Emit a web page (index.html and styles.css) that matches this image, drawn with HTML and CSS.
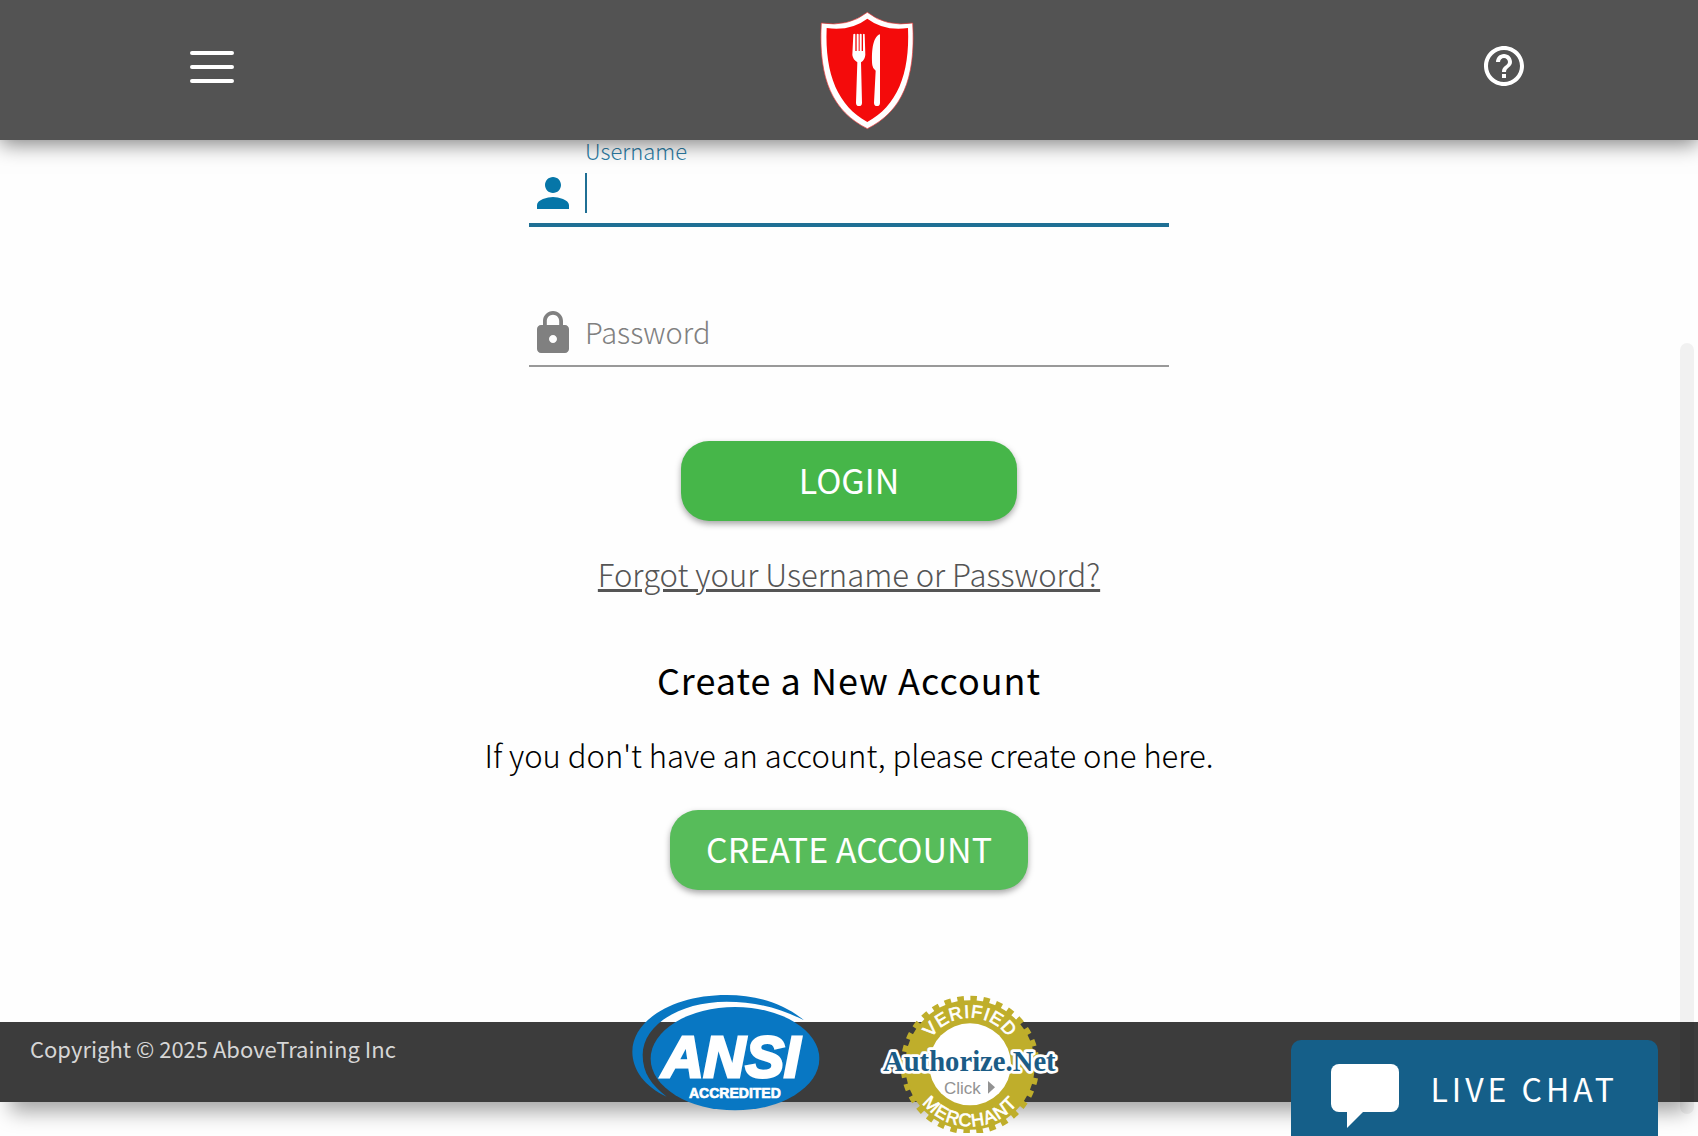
FILE: index.html
```html
<!DOCTYPE html>
<html lang="en">
<head>
<meta charset="utf-8">
<meta name="viewport" content="width=device-width, initial-scale=1">
<title>Login - AboveTraining</title>
<link rel="stylesheet" href="styles.css">
</head>
<body>
<header class="topbar">
  <button class="icon-button menu-button" type="button" aria-label="Menu">
    <svg width="44" height="32" viewBox="0 0 44 32" stroke="#fff" stroke-width="4" stroke-linecap="round"><path d="M2 2H42M2 16H42M2 30H42"/></svg>
  </button>
  <a class="logo" href="#" aria-label="Home">
    <svg width="96" height="120" viewBox="117 30 288 360">
      <path fill="#fff" stroke="#e33" stroke-width="2" d="M262 37Q205 82 124 69C114 240 160 335 262 386C364 335 408 240 398 69Q318 82 262 37Z"/>
      <path fill="#f40b0b" d="M262 56Q212 94 140 84C134 225 175 318 262 366C350 318 390 225 384 84Q312 94 262 56Z"/>
      <path fill="#fff" d="M220 103Q223 99 226 103V153H230V103Q233 99 236 103V153H239V103Q242 99 245 103V153H249V103Q252 99 254 103L256 164Q255 179 243 187L246 308Q246 318 237 318Q228 318 228 308L232 187Q219 179 217 165Z"/>
      <path fill="#fff" d="M300 103V308Q300 318 291 318Q282 318 282 308L287 212Q278 206 277 196C274 160 277 110 300 103Z"/>
    </svg>
  </a>
  <button class="icon-button help-button" type="button" aria-label="Help">
    <svg width="48" height="48" viewBox="0 0 24 24" fill="#fff"><path d="M11 18h2v-2h-2v2zm1-16C6.480 2 2 6.480 2 12s4.480 10 10 10 10-4.480 10-10S17.520 2 12 2zm0 18c-4.410 0-8-3.590-8-8s3.590-8 8-8 8 3.590 8 8-3.590 8-8 8zm0-14c-2.210 0-4 1.790-4 4h2c0-1.100.9-2 2-2s2 .9 2 2c0 2-3 1.750-3 5h2c0-2.250 3-2.500 3-5 0-2.210-1.790-4-4-4z"/></svg>
  </button>
</header>

<main class="content">
  <form class="login-form">
    <div class="field field-active">
      <label class="field-label" for="username">Username</label>
      <div class="field-row">
        <svg class="field-icon" width="48" height="48" viewBox="0 0 24 24"><path d="M12 12c2.210 0 4-1.790 4-4s-1.790-4-4-4-4 1.790-4 4 1.790 4 4 4zm0 2c-2.670 0-8 1.340-8 4v2h16v-2c0-2.660-5.330-4-8-4z"/></svg>
        <span class="caret"></span>
        <input class="field-input" id="username" type="text" autocomplete="username">
      </div>
    </div>
    <div class="field">
      <div class="field-row">
        <svg class="field-icon" width="48" height="48" viewBox="0 0 24 24"><path d="M18 8h-1V6c0-2.760-2.240-5-5-5S7 3.240 7 6v2H6c-1.100 0-2 .9-2 2v10c0 1.100.9 2 2 2h12c1.100 0 2-.9 2-2V10c0-1.100-.9-2-2-2zm-6 9c-1.100 0-2-.9-2-2s.9-2 2-2 2 .9 2 2-.9 2-2 2zm3.100-9H8.900V6c0-1.710 1.390-3.100 3.100-3.100s3.100 1.390 3.100 3.100v2z"/></svg>
        <label class="field-inline-label" for="password">Password</label>
        <input class="field-input" id="password" type="password" autocomplete="current-password">
      </div>
    </div>
    <button class="button button-login" type="submit">LOGIN</button>
  </form>
  <a class="forgot-link" href="#">Forgot your Username or Password?</a>
  <section class="signup">
    <h2 class="signup-title">Create a New Account</h2>
    <p class="signup-text">If you don't have an account, please create one here.</p>
    <button class="button button-create" type="button">CREATE ACCOUNT</button>
  </section>
</main>

<footer class="footer">
  <p class="copyright">Copyright © 2025 AboveTraining Inc</p>
  <div class="badges">
    <svg class="badge" width="190" height="142" viewBox="33 33 570 426" role="img" aria-label="ANSI Accredited">
      <g fill="#0877c3">
        <ellipse cx="345" cy="236" rx="253" ry="155"/>
        <path d="M552 121C490 70 410 45 320 45C160 45 37 120 37 215C37 270 75 320 140 350C95 315 68 280 68 225C68 135 180 65 320 65C405 65 480 84 552 121Z"/>
      </g>
      <text class="ansi-name" x="125" y="292">ANSI</text>
      <text class="ansi-caption" x="207" y="354">ACCREDITED</text>
    </svg>
    <svg class="badge" width="180" height="142" viewBox="57 33 540 426" role="img" aria-label="Authorize.Net Verified Merchant">
      <defs>
        <path id="arc-top" d="M188 255A142 142 0 0 1 472 255"/>
        <path id="arc-bottom" d="M146 255A184 184 0 0 0 514 255"/>
      </defs>
      <circle cx="330" cy="255" r="156" fill="none" stroke="#bfae2b" stroke-width="76"/>
      <circle cx="330" cy="255" r="198" fill="none" stroke="#bfae2b" stroke-width="20" pathLength="64" stroke-dasharray="1 1"/>
      <circle cx="330" cy="253" r="123" fill="#fff"/>
      <text class="seal-arc"><textPath href="#arc-top" startOffset="50%">VERIFIED</textPath></text>
      <text class="seal-arc"><textPath href="#arc-bottom" startOffset="50%">MERCHANT</textPath></text>
      <text class="seal-brand" x="328" y="274">Authorize.Net</text>
      <text class="seal-click" x="252" y="341">Click</text>
      <path fill="#929292" d="M384 303L405 322L384 341Z"/>
    </svg>
  </div>
</footer>

<button class="chat" type="button">
  <svg class="chat-icon" width="68" height="64" viewBox="0 0 68 64" fill="#fff"><rect width="68" height="48" rx="8"/><path d="M16 47V64L33 47Z"/></svg>
  <span class="chat-label">LIVE CHAT</span>
</button>
<div class="scroll-thumb" aria-hidden="true"></div>
</body>
</html>
```
FILE: styles.css
```css
* { box-sizing: border-box; }

body {
  margin: 0;
  min-height: 100vh;
  background: #fefefe;
  color: #000;
  font-family: "Noto Sans CJK SC", "Open Sans", sans-serif;
  font-weight: 300;
}

button { border: 0; font: inherit; cursor: pointer; }

.topbar {
  position: sticky;
  top: 0;
  z-index: 2;
  display: grid;
  grid-template-columns: 1fr auto 1fr;
  align-items: center;
  height: 140px;
  padding: 0 10% 0 11%;
  background: #535353;
  box-shadow: 0 4px 20px rgba(0, 0, 0, 0.5);
}

.icon-button { display: flex; padding: 0; background: none; }
.menu-button { justify-content: center; width: 50px; margin-bottom: 6px; }
.help-button { justify-self: end; margin-bottom: 8px; }
.logo { display: flex; margin-left: 20px; }

.content {
  display: flex;
  flex-direction: column;
  align-items: center;
  padding: 0 24px 132px;
}

.login-form {
  display: flex;
  flex-direction: column;
  align-items: center;
  gap: 74px;
  width: 100%;
  max-width: 640px;
}

.field { width: 100%; border-bottom: 2px solid #999; color: #808080; }
.field-active { border-bottom: 4px solid #1f6f94; color: #0676a8; }
.field-active .field-row { height: 63px; padding-top: 2px; }
.field-label {
  display: block;
  padding-left: 56px;
  color: #2c7da5;
  font-size: 22px;
  line-height: 20px;
}
.field-row { display: flex; align-items: center; height: 64px; }
.field-icon { flex: none; margin-right: 8px; fill: currentColor; }
.caret { flex: none; width: 2px; height: 40px; background: #1f6f94; }
.field-inline-label { padding-bottom: 4px; font-size: 29px; line-height: 40px; }
.field-input {
  flex: 1;
  min-width: 0;
  height: 40px;
  padding: 0;
  border: 0;
  outline: 0;
  background: transparent;
  font: inherit;
  font-size: 29px;
}

.button {
  height: 80px;
  padding: 0 36px 2px;
  border-radius: 28px;
  color: #fff;
  font-size: 34px;
  font-weight: 400;
  line-height: 48px;
  box-shadow: 0 3px 6px rgba(0, 0, 0, 0.35);
}
.button-login { width: 336px; background: #46b649; }
.button-create { background: #57bc5a; }

.forgot-link {
  margin-top: 33px;
  color: #555;
  font-size: 31px;
  line-height: 40px;
  text-decoration-thickness: 3px;
}

.signup { display: flex; flex-direction: column; align-items: center; margin-top: 61px; text-align: center; }
.signup-title { margin: 0; font-size: 36px; font-weight: 400; line-height: 48px; letter-spacing: 1px; }
.signup-text { margin: 32px 0 35px; font-size: 31px; line-height: 40px; }

.footer {
  display: grid;
  grid-template-columns: 1fr auto 1fr;
  height: 80px;
  margin-bottom: 34px;
  background: #3c3c3c;
  box-shadow: 0 20px 20px -10px rgba(0, 0, 0, 0.35);
}
.copyright { margin: 10px 0 0 30px; color: #d6d6d6; font-size: 22px; font-weight: 400; line-height: 32px; }
.badges { display: flex; gap: 58px; height: 142px; margin-top: -31px; padding-right: 8px; }
.badge { flex: none; }

.ansi-name { fill: #fff; font: italic 700 174px "Liberation Sans", Arial, sans-serif; stroke: #fff; stroke-width: 9px; }
.ansi-caption { fill: #fff; font: 700 42px "Liberation Sans", Arial, sans-serif; stroke: #fff; stroke-width: 2px; }
.seal-arc { fill: #fff; font: 400 54px "Liberation Sans", Arial, sans-serif; stroke: #fff; stroke-width: 2px; letter-spacing: 3px; text-anchor: middle; }
.seal-brand {
  fill: #1b5c86;
  stroke: #fff;
  stroke-width: 16px;
  stroke-linejoin: round;
  paint-order: stroke;
  font: 700 86px "Liberation Serif", "Times New Roman", serif;
  text-anchor: middle;
}
.seal-click { fill: #929292; font: 400 51px "Liberation Sans", Arial, sans-serif; }

.chat {
  position: fixed;
  right: 40px;
  bottom: 0;
  z-index: 3;
  display: flex;
  align-items: center;
  gap: 31px;
  height: 96px;
  padding: 8px 40px 0;
  border-radius: 10px 10px 0 0;
  background: #155f89;
  color: #fff;
  font-size: 32px;
  font-weight: 400;
  line-height: 40px;
  letter-spacing: 4px;
}
.chat-icon { flex: none; margin-top: 8px; }
.chat-label { padding-bottom: 8px; }

.scroll-thumb {
  position: fixed;
  top: 343px;
  right: 4px;
  bottom: 22px;
  z-index: 1;
  width: 14px;
  border-radius: 7px;
  background: rgba(0, 0, 0, 0.05);
}
```
